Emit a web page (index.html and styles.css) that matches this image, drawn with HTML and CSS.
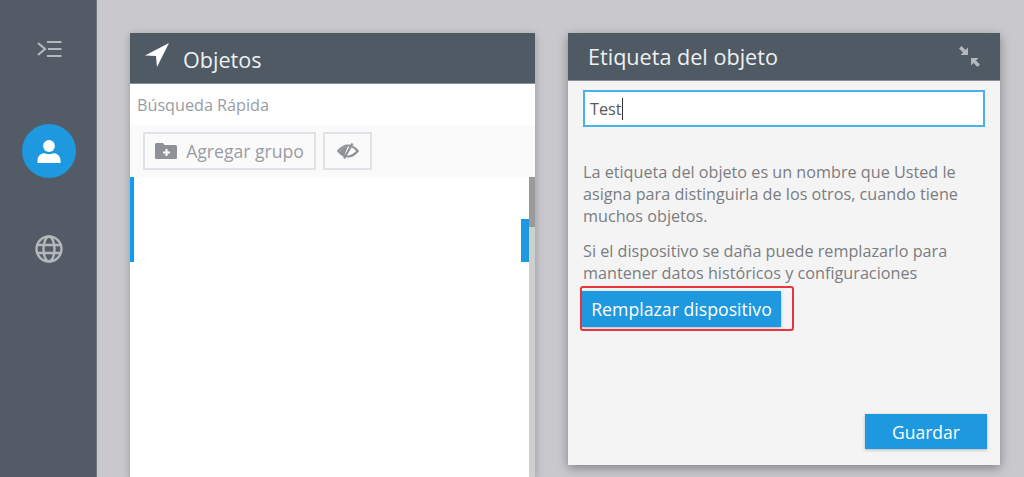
FILE: index.html
```html
<!DOCTYPE html>
<html lang="es">
<head>
<meta charset="utf-8">
<title>Etiqueta del objeto</title>
<link rel="stylesheet" href="styles.css">
</head>
<body>
<div class="app">
  <nav class="sidebar">
    <svg class="nav-menu" width="25" height="18" viewBox="0 0 25 18" fill="none" stroke="#b4b7bb" stroke-width="2.2">
      <path d="M1 3 L8 9 L1 15"/>
      <path d="M10 2H24.500M11 9H24.500M10 16H24.500"/>
    </svg>
    <div class="nav-active">
      <svg width="24" height="23" viewBox="0 0 24 23" fill="#fff">
        <circle cx="12" cy="6" r="5.900"/>
        <path d="M.5 23 V20.500 C.5 16 4 13.300 7.500 13.300 C9 14 10.500 14.300 12 14.300 C13.500 14.300 15 14 16.500 13.300 C20 13.300 23.500 16 23.500 20.500 V23 Z"/>
      </svg>
    </div>
    <svg class="nav-globe" width="28" height="28" viewBox="0 0 28 28" fill="none" stroke="#b4b7bb" stroke-width="2.400">
      <circle cx="14" cy="14" r="12.500"/>
      <ellipse cx="14" cy="14" rx="5.500" ry="12.500"/>
      <path d="M2 10H26M2 18H26"/>
    </svg>
  </nav>
  <main class="workspace">
    <section class="panel objects">
      <header class="panel-head objects-head">
        <svg width="24" height="24" viewBox="0 0 24 24" fill="#fff"><path d="M24 0 L0 12.500 L11 13 L12 24 Z"/></svg>
        <h2 class="objects-title">Objetos</h2>
      </header>
      <div class="search">Búsqueda Rápida</div>
      <div class="toolbar">
        <button class="tool-btn add-group">
          <svg width="22" height="16" viewBox="0 0 22 16"><path fill="#8e9197" d="M0 1.500 Q0 0 1.500 0H8L9.500 2H20.500Q22 2 22 3.500V14.500Q22 16 20.500 16H1.500Q0 16 0 14.500Z"/><path stroke="#fff" stroke-width="2" d="M11.500 6V13M8 9.500H15"/></svg>
          <span>Agregar grupo</span>
        </button>
        <button class="tool-btn toggle-eye">
          <svg width="22" height="16" viewBox="0 0 22 16" fill="none" stroke="#8e9197" stroke-width="2.200"><path d="M1.300 8 Q6 2.500 11 2.500 Q16 2.500 20.700 8 Q16 13.500 11 13.500 Q6 13.500 1.300 8Z"/><path d="M15.500 .5 L7 15.500"/><path fill="#8e9197" stroke="none" d="M3 8 Q6 4 11 3 L7 13Q5 11 3 8Z"/></svg>
        </button>
      </div>
      <div class="list">
        <div class="list-body">
          <div class="list-item"><span class="item-end"></span></div>
        </div>
        <div class="scrollbar"><div class="thumb"></div></div>
      </div>
    </section>
    <section class="panel label-panel">
      <header class="panel-head label-head">
        <h2 class="label-title">Etiqueta del objeto</h2>
        <svg width="21" height="21" viewBox="0 0 21 21" fill="#b4b7bb"><path d="M0 2.500 L2.500 0 L6.500 4 L9 1.500 V9 H1.500 L4 6.500 Z"/><path d="M21 18.500 L18.500 21 L14.500 17 L12 19.500 V12 H19.500 L17 14.500 Z"/></svg>
      </header>
      <div class="panel-body">
        <div class="field"><span class="field-text">Test</span><span class="caret"></span></div>
        <p class="copy first">La etiqueta del objeto es un nombre que Usted le asigna para distinguirla de los otros, cuando tiene muchos objetos.</p>
        <p class="copy second">Si el dispositivo se daña puede remplazarlo para mantener datos históricos y configuraciones</p>
        <div class="replace-wrap">
          <button class="btn replace">Remplazar dispositivo</button>
          <span class="callout"></span>
        </div>
        <div class="actions"><button class="btn save">Guardar</button></div>
      </div>
    </section>
  </main>
</div>
</body>
</html>
```
FILE: styles.css
```css
* { box-sizing: border-box; }
html, body { margin: 0; height: 100%; overflow: hidden; }
body { font-family: "Open Sans", "Liberation Sans", sans-serif; background: #c9c8cd; }
.app { display: flex; height: 477px; }

.sidebar {
  width: 97px; flex: none; background: #535c66; border-right: 1px solid #6c747c;
  display: flex; flex-direction: column; align-items: center; padding: 40px 0 0 2px;
}
.nav-active {
  width: 54px; height: 54px; border-radius: 50%; background: #1e98de; margin-top: 66px;
  display: flex; align-items: center; justify-content: center;
}
.nav-globe { margin-top: 57px; }

.workspace { flex: 1; display: flex; align-items: flex-start; padding: 33px 0 0 33px; }
.panel { display: flex; flex-direction: column; box-shadow: 0 2px 8px rgba(0,0,0,.25); }
.panel-head { background: #505a64; display: flex; align-items: center; color: #eef0f1; flex: none; }
h2 { margin: 0; font-weight: 400; }

.objects { width: 405px; height: 444px; background: #fff; }
.objects-head { height: 51px; padding: 0 0 0 15px; gap: 14px; border-bottom: 1px solid #8a9097; }
.objects-head svg { margin-top: -7px; }
.objects-title { font-size: 21.600px; line-height: 28px; margin-top: 3px; }
.search { height: 41px; padding: 10px 7px 0; font-size: 16.200px; line-height: 22px; color: #9a9ca3; background: #fff; }
.toolbar { height: 52px; background: #fafafa; display: flex; gap: 7px; padding: 7px 0 0 13px; }
.tool-btn {
  height: 38px; border: 2px solid #dfe2e6; background: #fafafa; padding: 0; font: inherit;
  display: flex; align-items: center; justify-content: center; color: #9a9ca3;
}
.add-group { width: 173px; gap: 9px; font-size: 17.600px; }
.toggle-eye { width: 49px; }
.list { flex: 1; display: flex; min-height: 0; }
.list-body { flex: 1; background: #fff; }
.list-item { height: 85px; border-left: 4px solid #0f9cf3; display: flex; justify-content: flex-end; align-items: flex-end; }
.item-end { width: 8px; height: 43px; background: #1e98de; }
.scrollbar { width: 6px; background: #cfcfcf; }
.thumb { height: 50px; background: #9a9a9a; }

.label-panel { width: 432px; height: 432px; margin-left: 33px; background: #f4f4f4; box-shadow: 0 3px 10px rgba(0,0,0,.35); }
.label-head { height: 48px; padding: 0 20px; justify-content: space-between; border-bottom: 1px solid #8a9097; }
.label-title { font-size: 21.600px; line-height: 28px; }
.panel-body { flex: 1; display: flex; flex-direction: column; padding: 9px 15px 16px; }
.field {
  height: 37px; background: #fff; border: 2px solid #49b2e8; display: flex; align-items: center; padding-left: 5px;
  font-size: 16.200px; color: #55595e;
}
.caret { width: 1px; height: 22px; background: #333; }
.copy { margin: 0; font-size: 16.200px; line-height: 22px; color: #7b7d80; }
.first { margin-top: 34px; }
.second { margin-top: 13px; }
.replace-wrap { position: relative; align-self: flex-start; margin: 7px 0 0 -1px; }
.btn { display: block; border: 0; background: #1e98de; color: #fff; font: inherit; padding: 0; box-shadow: 0 1px 3px rgba(0,0,0,.25); }
.replace { width: 199px; height: 36px; font-size: 17.700px; }
.callout { position: absolute; left: -2px; top: -5px; width: 214px; height: 45px; border: 2px solid #e8343c; border-radius: 3px; }
.actions { margin-top: auto; display: flex; justify-content: flex-end; margin-right: -2px; }
.save { width: 122px; height: 35px; font-size: 17.500px; }
```
